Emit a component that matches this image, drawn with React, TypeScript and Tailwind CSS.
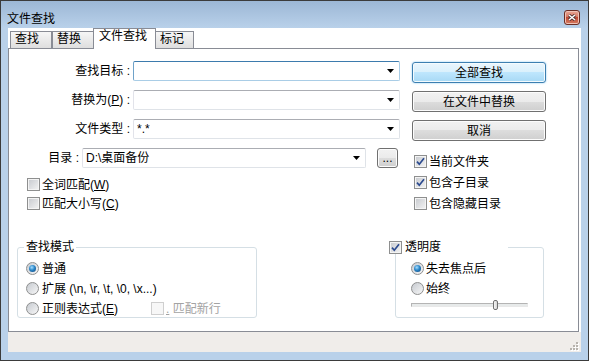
import React from "react";

const cx = (...c: (string | false | undefined)[]) => c.filter(Boolean).join(" ");

// small black triangle of a combo box
function DropArrow() {
  return (
    <svg width="7" height="4" viewBox="0 0 7 4" className="shrink-0">
      <path d="M0 0h7L3.5 4z" fill="#000" />
    </svg>
  );
}

function Combo({ value, width, focused }: { value?: string; width: string; focused?: boolean }) {
  return (
    <div
      className={cx(
        "h-[20px] shrink-0 flex items-center bg-white pl-[3px] pr-[5px] border rounded-[2px]",
        width,
        focused
          ? "border-[#a9cde6] border-t-[#3d7bad] border-l-[#6fa2c9]"
          : "border-[#dfe3e8] border-t-[#abadb3] border-l-[#e2e3ea]"
      )}
    >
      <span className="flex-1 whitespace-nowrap overflow-hidden">{value}</span>
      <DropArrow />
    </div>
  );
}

function Btn({ children, primary, className }: { children: React.ReactNode; primary?: boolean; className?: string }) {
  return (
    <div
      className={cx(
        "rounded-[3px] border flex items-center justify-center",
        className ?? "h-[21px] w-[134px]",
        primary
          ? "border-[#3c7fb1] bg-[linear-gradient(to_bottom,#eaf6fd_0%,#d9f0fc_50%,#bee6fd_50%,#a7d9f5_100%)] shadow-[inset_0_0_0_1px_#f4fbfe,0_0_2px_#7ec4f0]"
          : "border-[#707070] bg-[linear-gradient(to_bottom,#f2f2f2_0%,#ebebeb_50%,#dddddd_50%,#cfcfcf_100%)] shadow-[inset_0_0_0_1px_#fcfcfc]"
      )}
    >
      {children}
    </div>
  );
}

function Check({ on, disabled }: { on?: boolean; disabled?: boolean }) {
  return (
    <span
      className={cx(
        "w-[13px] h-[13px] shrink-0 border flex items-center justify-center",
        disabled
          ? "border-[#cfcfcf] bg-[#f7f7f7]"
          : "border-[#8e8f8f] bg-[linear-gradient(135deg,#c6c9ce,#f4f4f4)] shadow-[inset_0_0_0_1px_#f4f4f4]"
      )}
    >
      {on && (
        <svg width="9" height="9" viewBox="0 0 9 9">
          <path d="M1 4.6l2.3 2.6L8 1.3" fill="none" stroke="#2b4a8f" strokeWidth="1.7" />
        </svg>
      )}
    </span>
  );
}

function Radio({ on }: { on?: boolean }) {
  return (
    <span className="w-[13px] h-[13px] shrink-0 rounded-full border border-[#8e8f8f] bg-[linear-gradient(135deg,#c6cad0,#f7f7f7)] flex items-center justify-center">
      {on && (
        <span className="w-[7px] h-[7px] rounded-full bg-[radial-gradient(circle_at_40%_35%,#a6deff_0%,#2a86c8_45%,#0d3f73_100%)]" />
      )}
    </span>
  );
}

function CheckRow({ on, disabled, children }: { on?: boolean; disabled?: boolean; children: React.ReactNode }) {
  return (
    <div className="h-[13px] flex items-center gap-[2px] whitespace-nowrap">
      <Check on={on} disabled={disabled} />
      <span className={disabled ? "text-[#a3a3a3]" : ""}>{children}</span>
    </div>
  );
}

const U = ({ children }: { children: React.ReactNode }) => <span className="underline">{children}</span>;

export default function App() {
  return (
    <div className="w-[589px] h-[361px] flex flex-col border border-[#3b3b3b] bg-[#b9d1ea] text-[12px] leading-[14px] text-black font-['Liberation_Sans','Noto_Sans_CJK_SC',sans-serif] overflow-hidden select-none">
      {/* title bar */}
      <div className="h-[27px] shrink-0 flex items-start justify-between pl-[6px] pr-[8px] bg-gradient-to-b from-[#9cb7d5] to-[#b9d1ea]">
        <span className="mt-[11px]">文件查找</span>
        <div className="mt-[9px] w-[16px] h-[15px] rounded-[3px] border border-[#6b2e25] bg-[linear-gradient(to_bottom,#eaa998_0%,#d4735f_50%,#c04a36_50%,#d57c62_100%)] shadow-[inset_0_0_0_1px_#efc2b6] flex items-center justify-center">
          <svg width="8" height="7" viewBox="0 0 8 7">
            <path d="M1 1l6 5M7 1L1 6" stroke="#4a3030" strokeWidth="3" />
            <path d="M1 1l6 5M7 1L1 6" stroke="#fff" strokeWidth="1.5" />
          </svg>
        </div>
      </div>

      {/* client area */}
      <div className="flex-1 flex flex-col mx-[7px] mb-[8px] bg-white">
        {/* tabs */}
        <div className="h-[20px] shrink-0 flex items-end pl-[2px] relative z-10">
          <div className="w-[42px] h-[17px] border border-b-0 border-[#898c95] bg-gradient-to-b from-[#f6f6f6] to-[#dedede] pl-[4px]">查找</div>
          <div className="w-[42px] h-[17px] border border-b-0 border-[#898c95] bg-gradient-to-b from-[#f6f6f6] to-[#dedede] pl-[4px]">替换</div>
          <div className="-ml-[1px] w-[63px] h-[21px] -mb-[1px] border border-b-0 border-[#898c95] bg-white pl-[5px] relative z-10">文件查找</div>
          <div className="-ml-[1px] w-[39px] h-[17px] border border-b-0 border-[#898c95] bg-gradient-to-b from-[#f6f6f6] to-[#dedede] pl-[4px]">标记</div>
        </div>

        {/* tab panel */}
        <div className="h-[284px] w-[571px] shrink-0 border border-[#898c95] flex flex-col pt-[12px]">
          <div className="flex">
            {/* left column */}
            <div className="w-[391px] flex flex-col">
              <div className="flex flex-col gap-[9px]">
                <div className="h-[20px] flex items-center">
                  <span className="flex-1 text-right pr-[3px] whitespace-nowrap">查找目标 :</span>
                  <Combo width="w-[267px]" focused />
                </div>
                <div className="h-[20px] flex items-center">
                  <span className="flex-1 text-right pr-[3px] whitespace-nowrap">
                    替换为(<U>P</U>) :
                  </span>
                  <Combo width="w-[267px]" />
                </div>
                <div className="h-[20px] flex items-center">
                  <span className="flex-1 text-right pr-[3px] whitespace-nowrap">文件类型 :</span>
                  <Combo width="w-[267px]" value="*.*" />
                </div>
                <div className="h-[20px] flex items-center">
                  <span className="flex-1 text-right pr-[3px] whitespace-nowrap">目录 :</span>
                  <Combo width="w-[284px]" value="D:\桌面备份" />
                  <Btn className="ml-[11px] mr-[2px] w-[21px] h-[20px]">...</Btn>
                </div>
              </div>
              <div className="mt-[10px] ml-[18px] flex flex-col gap-[6px]">
                <CheckRow>
                  全词匹配(<U>W</U>)
                </CheckRow>
                <CheckRow>
                  匹配大小写(<U>C</U>)
                </CheckRow>
              </div>
            </div>

            {/* right column */}
            <div className="ml-[12px] mt-[1px] w-[134px] flex flex-col">
              <div className="flex flex-col gap-[8px]">
                <Btn primary>全部查找</Btn>
                <Btn>在文件中替换</Btn>
                <Btn>取消</Btn>
              </div>
              <div className="mt-[14px] ml-[2px] flex flex-col gap-[8px]">
                <CheckRow on>当前文件夹</CheckRow>
                <CheckRow on>包含子目录</CheckRow>
                <CheckRow>包含隐藏目录</CheckRow>
              </div>
            </div>
          </div>

          {/* group boxes */}
          <div className="flex mt-[30px]">
            <fieldset className="ml-[8px] w-[240px] h-[78px] border border-[#d5dfe5] rounded-[3px] pl-[8px] pt-[8px]">
              <legend className="-ml-[2px] px-[2px] leading-[14px]">查找模式</legend>
              <div className="flex flex-col gap-[7px]">
                <div className="h-[13px] flex items-center gap-[3px]">
                  <Radio on />
                  <span>普通</span>
                </div>
                <div className="h-[13px] flex items-center gap-[3px] whitespace-nowrap">
                  <Radio />
                  <span>扩展 (\n, \r, \t, \0, \x...)</span>
                </div>
                <div className="h-[13px] flex items-center gap-[3px] whitespace-nowrap">
                  <Radio />
                  <span className="w-[106px]">
                    正则表达式(<U>E</U>)
                  </span>
                  <CheckRow disabled>
                    <U>.</U> 匹配新行
                  </CheckRow>
                </div>
              </div>
            </fieldset>

            <fieldset className="ml-[138px] w-[149px] h-[78px] border border-[#d5dfe5] rounded-[3px] pl-[15px] pt-[8px]">
              <legend className="-ml-[22px] w-[119px] leading-[14px]">
                <span className="flex items-center gap-[3px]">
                  <Check on />
                  <span>透明度</span>
                </span>
              </legend>
              <div className="flex flex-col gap-[7px]">
                <div className="h-[13px] flex items-center gap-[2px]">
                  <Radio on />
                  <span>失去焦点后</span>
                </div>
                <div className="h-[13px] flex items-center gap-[2px]">
                  <Radio />
                  <span>始终</span>
                </div>
              </div>
              <div className="relative mt-[5px] w-[117px] h-[10px] flex items-center">
                <div className="w-full h-[4px] border border-[#b4b4b4] border-b-[#e8e8e8] border-r-[#e8e8e8] bg-[#e7eaea]" />
                <div className="absolute left-[82px] top-0 w-[5px] h-[10px] rounded-[2px] border border-[#707070] bg-[linear-gradient(to_right,#f6f6f6,#d6d6d6)]" />
              </div>
            </fieldset>
          </div>
        </div>

        {/* status strip with size grip */}
        <div className="flex-1 bg-[#f0edea] flex items-end justify-end pr-[2px] pb-[1px]">
          <svg width="9" height="9" viewBox="0 0 9 9">
            {[
              [6, 0],
              [3, 3],
              [6, 3],
              [0, 6],
              [3, 6],
              [6, 6],
            ].map(([x, y]) => (
              <g key={`${x}-${y}`}>
                <rect x={x + 1} y={y + 1} width="2" height="2" fill="#ffffff" />
                <rect x={x} y={y} width="2" height="2" fill="#b7b3ad" />
              </g>
            ))}
          </svg>
        </div>
      </div>
    </div>
  );
}
